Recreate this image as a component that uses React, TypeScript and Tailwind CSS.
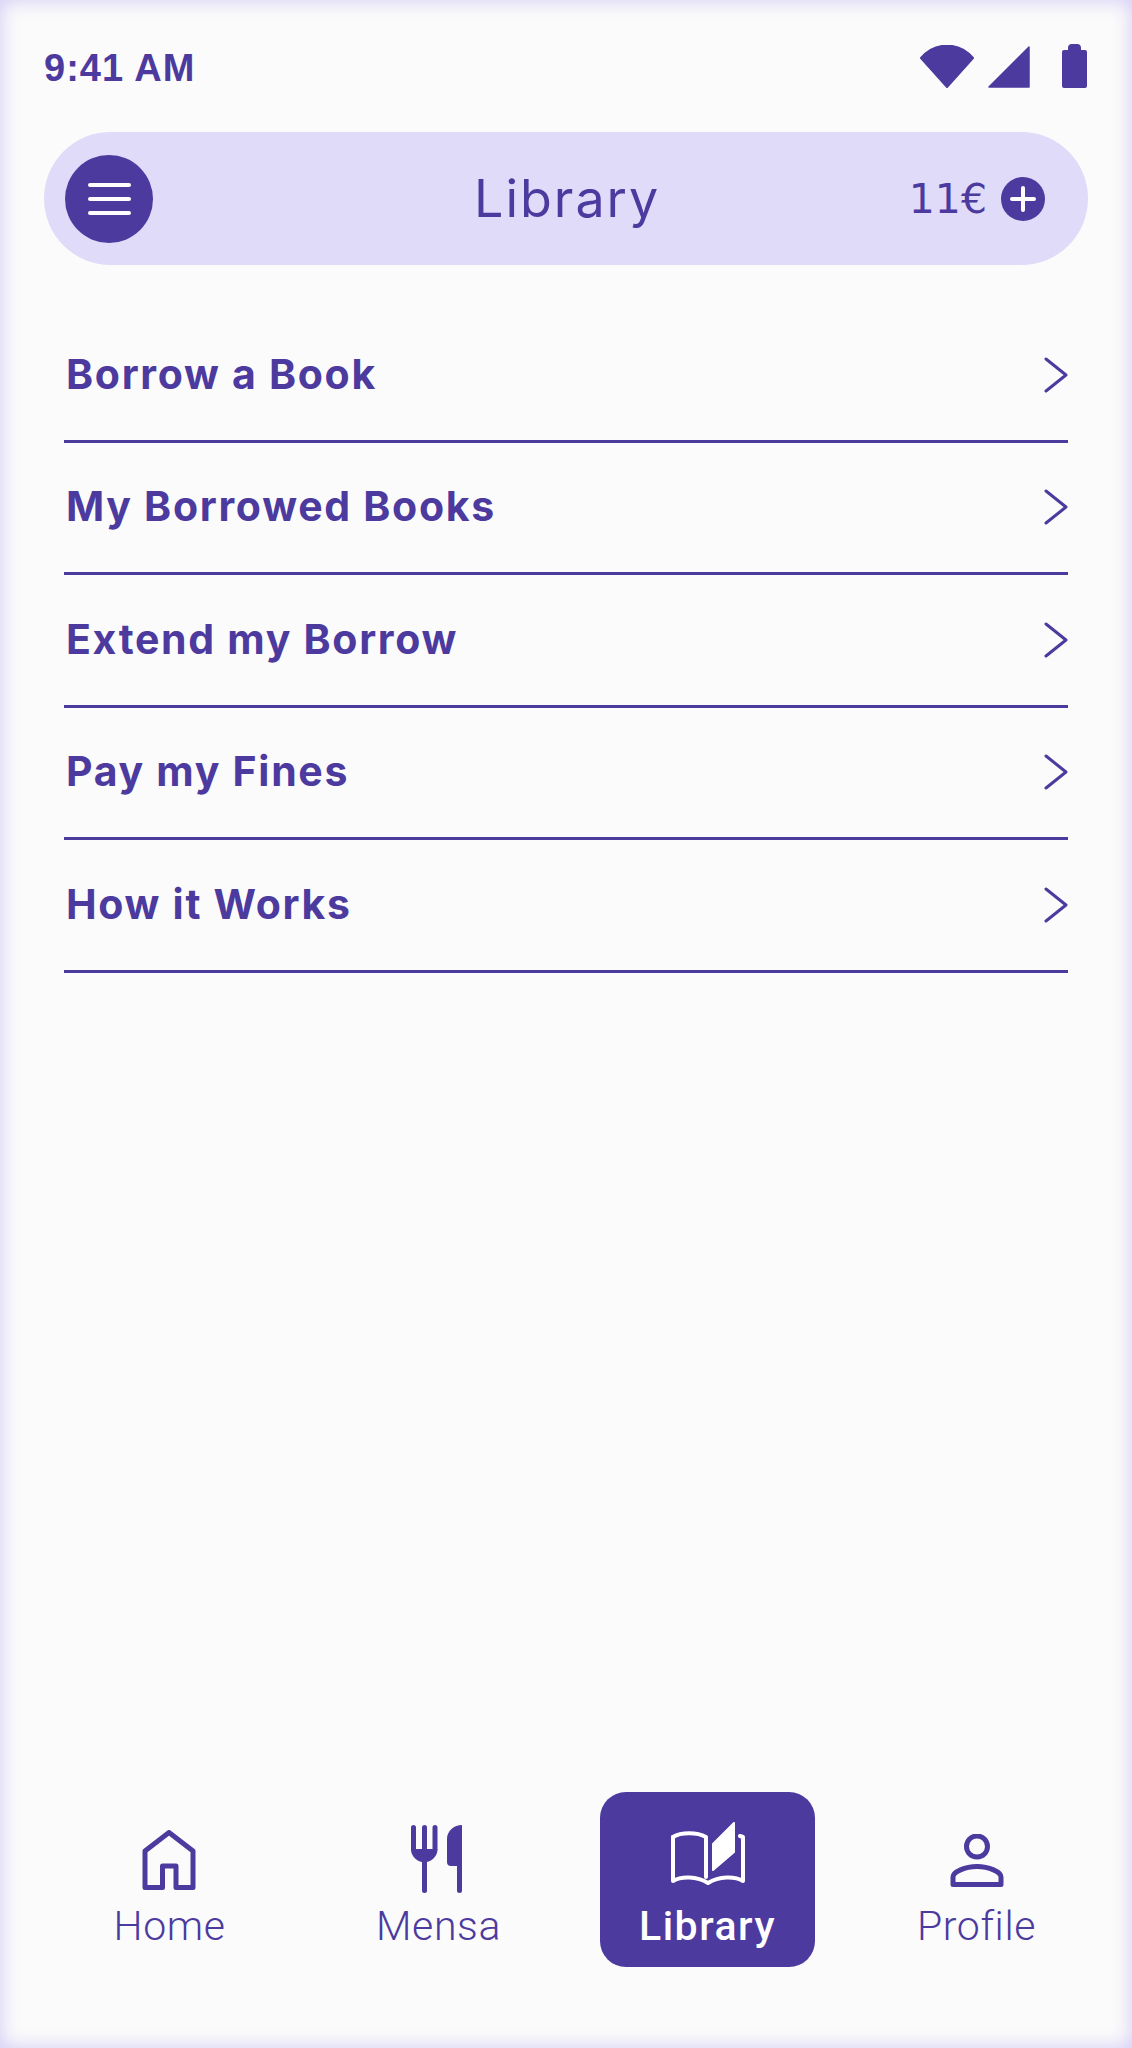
const menuItems = ["Borrow a Book", "My Borrowed Books", "Extend my Borrow", "Pay my Fines", "How it Works"];

function WifiIcon() {
  return (
    <svg width="56" height="43" viewBox="0 0 56 43" fill="#4c3a9f">
      <path d="M2 13 C16 -3.5 40 -3.5 54 13 L28 42 Z" stroke="#4c3a9f" strokeWidth="2" strokeLinejoin="round" />
    </svg>
  );
}

function SignalIcon() {
  return (
    <svg width="42" height="42" viewBox="0 0 42 42" fill="#4c3a9f">
      <path d="M41 1 V41 H1 Z" stroke="#4c3a9f" strokeWidth="1.5" strokeLinejoin="round" />
    </svg>
  );
}

function BatteryIcon() {
  return (
    <svg width="25" height="44" viewBox="0 0 25 44" fill="#4c3a9f">
      <path d="M6 6 V4 A4 4 0 0 1 10 0 H15 A4 4 0 0 1 19 4 V6 H23 A2 2 0 0 1 25 8 V42 A2 2 0 0 1 23 44 H2 A2 2 0 0 1 0 42 V8 A2 2 0 0 1 2 6 Z" />
    </svg>
  );
}

function Chevron() {
  return (
    <svg width="24" height="36" viewBox="0 0 24 36" fill="none" stroke="#4c3a9f" strokeWidth="3" strokeLinecap="round" strokeLinejoin="round">
      <path d="M2 2 L22 18 L2 34" />
    </svg>
  );
}

function HomeIcon() {
  return (
    <svg width="54" height="60" viewBox="0 0 54 60" fill="none" stroke="#4c3a9f" strokeWidth="5" strokeLinejoin="round">
      <path d="M3 57.5 H20.5 V36 H34 V57.5 H51 V21 L27 2.5 L3 21 Z" />
    </svg>
  );
}

function MensaIcon() {
  return (
    <svg width="51" height="68" viewBox="0 0 51 68" fill="#4c3a9f">
      <path d="M2.5 2.5 V24 M13.5 2.5 V65.5 M24 2.5 V24" stroke="#4c3a9f" strokeWidth="5" strokeLinecap="round" />
      <path d="M0 24 H26.5 A13.25 13.25 0 0 1 0 24 Z" />
      <path d="M51 2 V65.5 A2.5 2.5 0 0 1 46 65.5 V41 H40 A4 4 0 0 1 36 37 V14 C36 6 43 0 51 0 Z" />
    </svg>
  );
}

function BookIcon() {
  return (
    <svg width="74" height="63" viewBox="0 0 74 63" fill="none" stroke="#ffffff" strokeWidth="4" strokeLinejoin="round" strokeLinecap="round">
      <path d="M2 15 C10 10 26 10 35 15 V55" />
      <path d="M2 15 V59 C10 54 26 54 37 61 C48 54 64 54 72 59 V15 L69 14" />
      <path d="M42 22 L63 1 V30 L42 48 Z" fill="#ffffff" strokeWidth="2" />
    </svg>
  );
}

function ProfileIcon() {
  return (
    <svg width="54" height="53" viewBox="0 0 54 53" fill="none" stroke="#4c3a9f" strokeWidth="5" strokeLinejoin="round">
      <circle cx="27" cy="12.5" r="10.5" />
      <path d="M3 50.5 V43 C3 38 15 32.5 27 32.5 C39 32.5 51 38 51 43 V50.5 Z" />
    </svg>
  );
}

function NavItem({ label, icon, active, iconClass }: { label: string; icon: React.ReactNode; active?: boolean; iconClass: string }) {
  return (
    <div className={`w-[215px] h-[175px] flex flex-col items-center rounded-[26px] ${active ? "bg-[#4c3a9f] text-white font-medium tracking-[1.5px]" : "text-[#4c3a9f] font-light tracking-[0.6px]"}`}>
      <div className={`h-[101px] flex items-end justify-center ${iconClass}`}>{icon}</div>
      <span className="mt-[8px] text-[41px] leading-[50px] font-['Roboto',sans-serif]">{label}</span>
    </div>
  );
}

export default function App() {
  return (
    <div className="h-[2048px] w-[1132px] flex flex-col bg-[#fbfbfb] text-[#4c3a9f] shadow-[inset_0_0_20px_#cfc8f4] font-['Inter',sans-serif]">
      {/* Status bar */}
      <div className="h-[132px] pl-[44px] pr-[45px] pt-[44px] flex items-start justify-between">
        <span className="font-['Liberation_Sans',sans-serif] font-bold text-[38px] leading-[44px] tracking-[1px] mt-[2px]">9:41 AM</span>
        <div className="flex items-end">
          <WifiIcon />
          <div className="ml-[13px]"><SignalIcon /></div>
          <div className="ml-[32px]"><BatteryIcon /></div>
        </div>
      </div>

      {/* Header */}
      <div className="mx-[44px] h-[133px] rounded-full bg-[#e0dbf9] flex items-center pl-[21px] pr-[43px]">
        <div className="w-[88px] h-[88px] rounded-full bg-[#4c3a9f] flex flex-col items-center justify-center gap-[10px]">
          <div className="w-[43px] h-[4px] rounded-full bg-white" />
          <div className="w-[43px] h-[4px] rounded-full bg-white" />
          <div className="w-[43px] h-[4px] rounded-full bg-white" />
        </div>
        <span className="ml-[321px] text-[52px] leading-[60px] tracking-[2px]">Library</span>
        <span className="ml-auto text-[41px] leading-[50px] font-['DejaVu_Sans',sans-serif]">11€</span>
        <div className="ml-[14px] w-[44px] h-[44px] rounded-full bg-[#4c3a9f] relative">
          <div className="absolute left-[9px] top-[20px] w-[26px] h-[4px] rounded-full bg-white" />
          <div className="absolute left-[20px] top-[9px] w-[4px] h-[26px] rounded-full bg-white" />
        </div>
      </div>

      {/* Menu */}
      <div className="flex-1 mt-[45px] pl-[64px] pr-[64px]">
        {menuItems.map((item) => (
          <div key={item} className="h-[132.5px] border-b-[3px] border-[#4c3a9f] flex items-center justify-between pl-[2px] pb-[2px]">
            <span className="text-[41px] leading-[50px] font-bold tracking-[1.7px]">{item}</span>
            <div className="mt-[2px]"><Chevron /></div>
          </div>
        ))}
      </div>

      {/* Bottom nav */}
      <div className="h-[256px] pl-[62px] flex items-start gap-[54px]">
        <NavItem label="Home" icon={<HomeIcon />} iconClass="pb-[3px] mr-[2px]" />
        <NavItem label="Mensa" icon={<MensaIcon />} iconClass="mr-[4px]" />
        <NavItem label="Library" icon={<BookIcon />} iconClass="pb-[8px]" active />
        <NavItem label="Profile" icon={<ProfileIcon />} iconClass="pb-[6px]" />
      </div>
    </div>
  );
}
